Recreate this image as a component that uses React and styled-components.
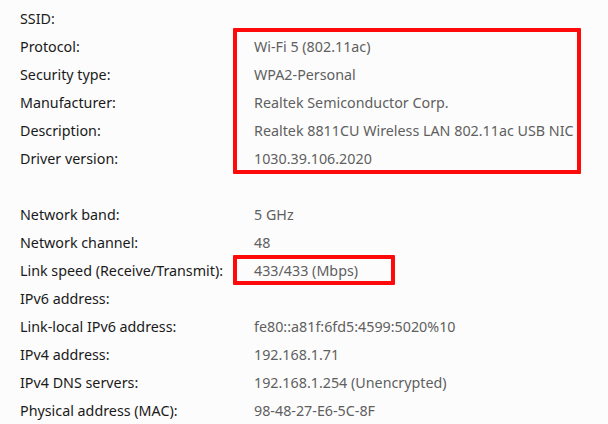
import React from "react";
import styled, { createGlobalStyle } from "styled-components";

const GlobalStyle = createGlobalStyle`
    html, body {
        margin: 0;
        padding: 0;
        background: #fcfcfc;
    }
    body {
        font-family: "Segoe UI", "Noto Sans", "Open Sans", sans-serif;
        -webkit-font-smoothing: antialiased;
    }
`;

const rows = [
    { label: "SSID:", value: "" },
    { label: "Protocol:", value: "Wi-Fi 5 (802.11ac)" },
    { label: "Security type:", value: "WPA2-Personal" },
    { label: "Manufacturer:", value: "Realtek Semiconductor Corp." },
    { label: "Description:", value: "Realtek 8811CU Wireless LAN 802.11ac USB NIC" },
    { label: "Driver version:", value: "1030.39.106.2020" },
    null,
    { label: "Network band:", value: "5 GHz" },
    { label: "Network channel:", value: "48" },
    { label: "Link speed (Receive/Transmit):", value: "433/433 (Mbps)" },
    { label: "IPv6 address:", value: "" },
    { label: "Link-local IPv6 address:", value: "fe80::a81f:6fd5:4599:5020%10" },
    { label: "IPv4 address:", value: "192.168.1.71" },
    { label: "IPv4 DNS servers:", value: "192.168.1.254 (Unencrypted)" },
    { label: "Physical address (MAC):", value: "98-48-27-E6-5C-8F" },
];

const App = () => {
    return (
        <>
            <GlobalStyle />
            <Sheet>
                {rows.map((row, i) =>
                    row ? (
                        <React.Fragment key={i}>
                            <Label row={i + 1}>{row.label}</Label>
                            <Value row={i + 1}>{row.value}</Value>
                        </React.Fragment>
                    ) : (
                        <Spacer key={i} row={i + 1} />
                    )
                )}
                <Highlight from={2} to={7} top="-5px" bottom="-1px" />
                <Highlight from={10} to={11} top="-2px" bottom="0" width="162px" />
            </Sheet>
        </>
    );
};

const Sheet = styled.div`
    display: grid;
    grid-template-columns: 213px 348px;
    grid-auto-rows: 28px;
    padding: 5px 0 0 20px;
`;

const Cell = styled.div`
    grid-row: ${(props) => props.row};
    display: flex;
    align-items: center;
    font-size: 14.3px;
    line-height: 20px;
    white-space: nowrap;
`;

const Label = styled(Cell)`
    grid-column: 1;
    color: #1a1a1a;
`;

const Value = styled(Cell)`
    grid-column: 2;
    padding-left: 21px;
    color: #5f5f5f;
`;

const Spacer = styled.div`
    grid-row: ${(props) => props.row};
    grid-column: 1 / 3;
`;

const Highlight = styled.div`
    grid-column: 2;
    grid-row: ${(props) => props.from} / ${(props) => props.to};
    justify-self: start;
    width: ${(props) => props.width || "100%"};
    box-sizing: border-box;
    margin-top: ${(props) => props.top};
    margin-bottom: ${(props) => props.bottom};
    border: 4px solid #ff0a0a;
    border-radius: 1px;
    pointer-events: none;
`;

export default App;
